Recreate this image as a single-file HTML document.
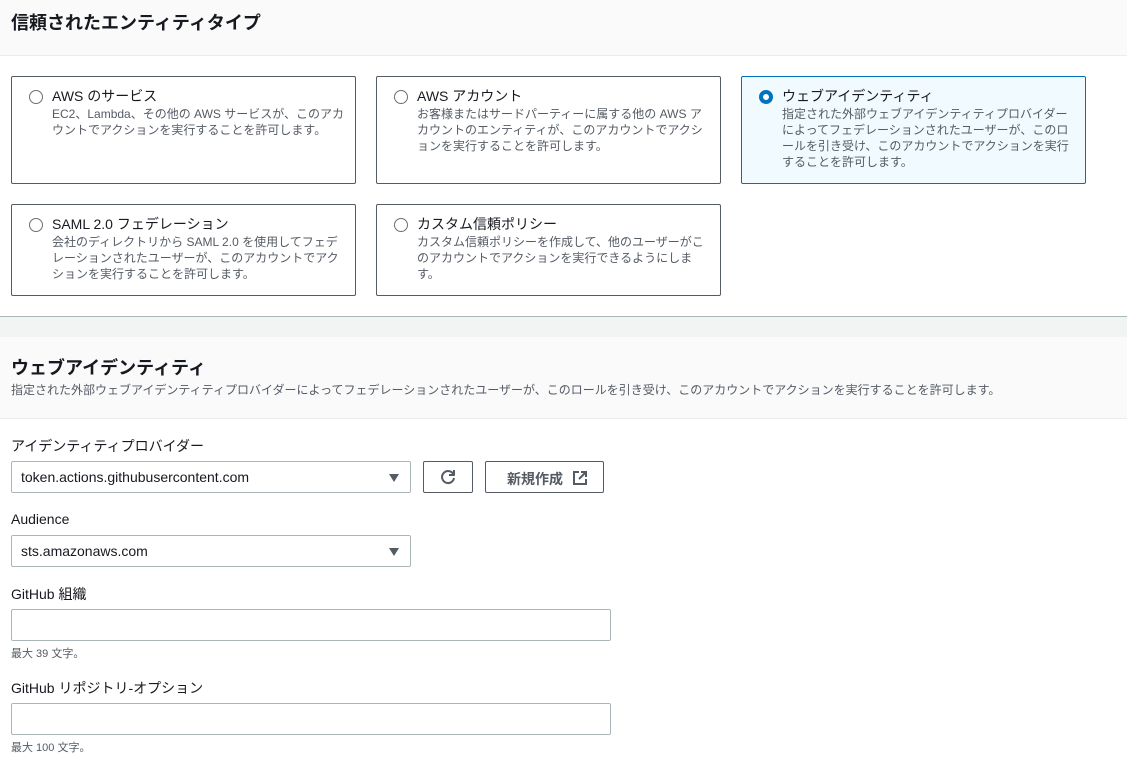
<!DOCTYPE html>
<html><head><meta charset="utf-8"><style>
*{box-sizing:border-box;margin:0;padding:0}
body{width:1127px;height:761px;overflow:hidden;background:#fff;font-family:"Liberation Sans","Noto Sans CJK JP",sans-serif;color:#16191f;position:relative}
.a{position:absolute}
.card{position:absolute;border:1px solid #545b64;border-radius:2px;background:#fff;padding:11px 4px 0 40px}
.card.sel{background:#f1faff;border-color:#0073bb}
.card .r{position:absolute;left:17px;top:13px;width:14px;height:14px;border:1px solid #687078;border-radius:50%;background:#fff}
.card.sel .r{border:4px solid #0073bb}
.card .t{font-size:14px;line-height:16px;color:#16191f}
.card .d{font-size:12px;line-height:16px;color:#545b64;margin-top:2px;white-space:nowrap}
.lbl{position:absolute;left:11px;font-size:14px;color:#16191f}
.sel2{position:absolute;left:11px;width:400px;height:32px;border:1px solid #aab7b8;border-radius:2px;font-size:14px;padding:7px 9px;color:#16191f}
.sel2:after{content:"";position:absolute;right:11px;top:12px;border-left:5px solid transparent;border-right:5px solid transparent;border-top:8px solid #545b64}
.inp{position:absolute;left:11px;width:600px;height:32px;border:1px solid #aab7b8;border-radius:2px}
.hint{position:absolute;left:11px;font-size:11px;color:#545b64}
.btn{position:absolute;height:32px;border:1px solid #545b64;border-radius:2px;background:#fff;font-size:14px;font-weight:bold;color:#545b64}
</style></head><body>
<div class="a" style="left:0;top:0;width:1127px;height:56px;background:#fafafa;border-bottom:1px solid #eaeded"></div>
<div class="a" style="left:11px;top:9px;font-size:18px;font-weight:bold">信頼されたエンティティタイプ</div>

<div class="card" style="left:11px;top:76px;width:345px;height:108px"><span class="r"></span><div class="t">AWS のサービス</div><div class="d">EC2、Lambda、その他の AWS サービスが、このアカ<br>ウントでアクションを実行することを許可します。</div></div>
<div class="card" style="left:376px;top:76px;width:345px;height:108px"><span class="r"></span><div class="t">AWS アカウント</div><div class="d">お客様またはサードパーティーに属する他の AWS ア<br>カウントのエンティティが、このアカウントでアクシ<br>ョンを実行することを許可します。</div></div>
<div class="card sel" style="left:741px;top:76px;width:345px;height:108px"><span class="r"></span><div class="t">ウェブアイデンティティ</div><div class="d">指定された外部ウェブアイデンティティプロバイダー<br>によってフェデレーションされたユーザーが、このロ<br>ールを引き受け、このアカウントでアクションを実行<br>することを許可します。</div></div>
<div class="card" style="left:11px;top:204px;width:345px;height:92px"><span class="r"></span><div class="t">SAML 2.0 フェデレーション</div><div class="d">会社のディレクトリから SAML 2.0 を使用してフェデ<br>レーションされたユーザーが、このアカウントでアク<br>ションを実行することを許可します。</div></div>
<div class="card" style="left:376px;top:204px;width:345px;height:92px"><span class="r"></span><div class="t">カスタム信頼ポリシー</div><div class="d">カスタム信頼ポリシーを作成して、他のユーザーがこ<br>のアカウントでアクションを実行できるようにしま<br>す。</div></div>

<div class="a" style="left:0;top:316px;width:1127px;height:21px;background:#f2f3f3;border-top:1px solid #aab7b8"></div>
<div class="a" style="left:0;top:337px;width:1127px;height:82px;background:#fafafa;border-bottom:1px solid #eaeded"></div>
<div class="a" style="left:11px;top:354px;font-size:18px;font-weight:bold">ウェブアイデンティティ</div>
<div class="a" style="left:11px;top:381px;font-size:12px;color:#545b64">指定された外部ウェブアイデンティティプロバイダーによってフェデレーションされたユーザーが、このロールを引き受け、このアカウントでアクションを実行することを許可します。</div>

<div class="lbl" style="top:436px">アイデンティティプロバイダー</div>
<div class="sel2" style="top:461px">token.actions.githubusercontent.com</div>
<div class="btn" style="left:423px;top:461px;width:50px"><svg width="18" height="18" viewBox="0 0 18 18" style="position:absolute;left:15px;top:6px" fill="none" stroke="#545b64" stroke-width="2"><path d="M14.5 6.5A6 6 0 1 0 15 10"/><path d="M15 2v5h-5" stroke-linejoin="round"/></svg></div>
<div class="btn" style="left:485px;top:461px;width:119px;padding:7px 0 0 21px">新規作成<svg width="14" height="14" viewBox="0 0 14 14" style="position:absolute;left:87px;top:9px" fill="none" stroke="#545b64" stroke-width="2"><path d="M6 1H1v12h12V8M8 1h5v5M13 1L6 8"/></svg></div>

<div class="lbl" style="top:511px">Audience</div>
<div class="sel2" style="top:535px">sts.amazonaws.com</div>

<div class="lbl" style="top:584px">GitHub 組織</div>
<div class="inp" style="top:609px"></div>
<div class="hint" style="top:645px">最大 39 文字。</div>

<div class="lbl" style="top:678px">GitHub リポジトリ-オプション</div>
<div class="inp" style="top:703px"></div>
<div class="hint" style="top:739px">最大 100 文字。</div>
</body></html>
